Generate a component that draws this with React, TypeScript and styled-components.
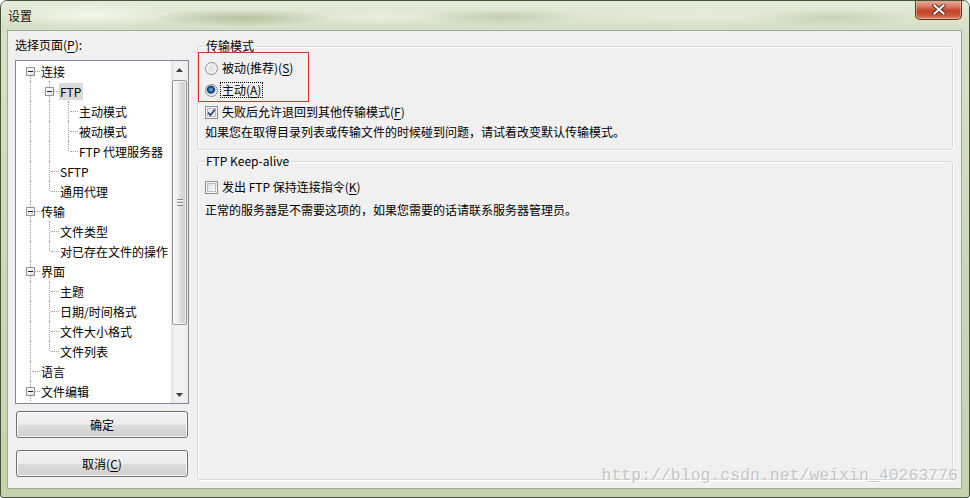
import React from 'react';
import styled, { createGlobalStyle } from 'styled-components';

const FONT = `"Noto Sans CJK SC", "Noto Sans", sans-serif`;

const GlobalStyle = createGlobalStyle`
  html, body { margin: 0; padding: 0; background: #ffffff; }
  body { font-family: ${FONT}; font-size: 12px; color: #000; }
  #root { width: 970px; height: 498px; }
  u { text-decoration: underline; text-underline-offset: 2px; text-decoration-thickness: 1px; }
`;

const Window = styled.div`
  position: relative;
  box-sizing: border-box;
  width: 970px;
  height: 498px;
  display: flex;
  flex-direction: column;
  border: 1px solid #48533f;
  border-radius: 7px 7px 3px 3px;
  background: linear-gradient(to bottom, #e2e9d5 0px, #d7e1c7 30px, #cbd8b6 55%, #c4d2ae 100%);
  overflow: hidden;
  font-family: ${FONT};
`;

const TitleBar = styled.div`
  flex: none;
  height: 29px;
  display: flex;
  align-items: flex-start;
  justify-content: space-between;
  background:
    radial-gradient(ellipse 90px 12px at 90px 14px, rgba(246, 248, 238, 0.9), transparent),
    radial-gradient(ellipse 90px 9px at 240px 17px, rgba(160, 176, 134, 0.65), transparent),
    radial-gradient(ellipse 70px 8px at 380px 16px, rgba(240, 244, 228, 0.7), transparent),
    radial-gradient(ellipse 80px 9px at 500px 16px, rgba(170, 186, 146, 0.5), transparent),
    radial-gradient(ellipse 120px 10px at 700px 15px, rgba(236, 240, 224, 0.6), transparent),
    radial-gradient(ellipse 90px 9px at 830px 17px, rgba(178, 194, 152, 0.5), transparent),
    linear-gradient(to bottom, #e6ecdb, #d6dfc7);
`;

const Title = styled.div`
  padding-left: 7px;
  line-height: 29px;
  font-size: 12px;
  color: #111;
`;

const CloseButton = styled.div`
  flex: none;
  box-sizing: border-box;
  width: 47px;
  height: 20px;
  margin-top: -1px;
  margin-right: 7px;
  display: flex;
  align-items: center;
  justify-content: center;
  border: 1px solid #6b3428;
  border-top: none;
  border-radius: 0 0 5px 5px;
  background: linear-gradient(to bottom, #eab0a0 0%, #d87a62 35%, #c4452b 55%, #c9553a 80%, #dd8a6c 100%);
  box-shadow: inset 0 0 0 1px rgba(255, 220, 205, 0.45);
`;

const Client = styled.div`
  flex: 1;
  min-height: 0;
  display: flex;
  margin: 0 7px 8px 6px;
  border: 1px solid #a2ab97;
  background: #f0f0f0;
`;

const LeftPane = styled.div`
  flex: none;
  box-sizing: border-box;
  width: 181px;
  padding: 6px 0 0 7px;
  display: flex;
  flex-direction: column;
`;

const PaneLabel = styled.div`
  height: 16px;
  line-height: 16px;
  font-size: 12px;
  margin-bottom: 7px;
`;

const TreeBox = styled.div`
  box-sizing: border-box;
  width: 174px;
  height: 344px;
  display: flex;
  border: 1px solid #828790;
  background: #ffffff;
`;

const TreeList = styled.div`
  flex: 1;
  min-width: 0;
  overflow: hidden;
  padding-left: 5px;
`;

const TreeRow = styled.div`
  display: flex;
  align-items: center;
  height: 20px;
`;

const Guide = styled.span<{ $top?: boolean; $bottom?: boolean; $branch?: boolean }>`
  position: relative;
  flex: none;
  width: 19px;
  height: 20px;
  &::before {
    content: '';
    position: absolute;
    left: 9px;
    top: ${(p) => (p.$top ? '0' : '10px')};
    bottom: ${(p) => (p.$bottom ? '0' : '10px')};
    border-left: 1px dotted #a0a0a0;
    display: ${(p) => (p.$top || p.$bottom ? 'block' : 'none')};
  }
  &::after {
    content: '';
    position: absolute;
    left: 11px;
    top: 10px;
    width: 8px;
    border-top: 1px dotted #a0a0a0;
    display: ${(p) => (p.$branch ? 'block' : 'none')};
  }
`;

const Expander = styled.span`
  position: absolute;
  z-index: 1;
  left: 5px;
  top: 6px;
  width: 7px;
  height: 7px;
  border: 1px solid #979797;
  background: linear-gradient(135deg, #ffffff 0%, #f2f2f2 50%, #d9d9d9 100%);
  &::after {
    content: '';
    position: absolute;
    left: 1px;
    top: 3px;
    width: 5px;
    height: 1px;
    background: #1e1e1e;
  }
`;

const NodeLabel = styled.span<{ $selected?: boolean }>`
  white-space: nowrap;
  height: 17px;
  line-height: 17px;
  padding: 0 2px 0 1px;
  font-size: 12px;
  background: ${(p) => (p.$selected ? '#dadada' : 'transparent')};
`;

const ScrollBar = styled.div`
  flex: none;
  width: 17px;
  display: flex;
  flex-direction: column;
  background: linear-gradient(to right, #e4e4e4 0%, #f2f2f2 25%, #f2f2f2 75%, #eaeaea 100%);
`;

const ScrollArrow = styled.div`
  flex: none;
  height: 17px;
  display: flex;
  align-items: center;
  justify-content: center;
`;

const ScrollSpacer = styled.div`
  flex: 1;
`;

const ScrollThumb = styled.div`
  flex: none;
  box-sizing: border-box;
  height: 245px;
  margin: 2px 1px 0 1px;
  border: 1px solid #979797;
  border-radius: 2px;
  background: linear-gradient(to right, #f7f7f7 0%, #ececec 45%, #dcdcdc 55%, #cfcfcf 100%);
  box-shadow: inset 0 0 0 1px rgba(255, 255, 255, 0.7);
  display: flex;
  align-items: center;
  justify-content: center;
`;

const Grip = styled.span`
  width: 6px;
  height: 7px;
  background: repeating-linear-gradient(to bottom, #8c8c8c 0 1px, #fbfbfb 1px 2px, transparent 2px 3px);
`;

const DialogButton = styled.button<{ $gap: number }>`
  display: flex;
  align-items: center;
  justify-content: center;
  box-sizing: border-box;
  width: 172px;
  height: 27px;
  margin: ${(p) => p.$gap}px 0 0 1px;
  padding: 0;
  border: 1px solid #707070;
  border-radius: 3px;
  background: linear-gradient(to bottom, #f3f3f3 0%, #ebebeb 50%, #dddddd 51%, #cfcfcf 100%);
  box-shadow: inset 0 0 0 1px #fbfbfb;
  font-family: ${FONT};
  font-size: 12px;
  line-height: 1;
  color: #000;
`;

const RightPane = styled.div`
  flex: 1;
  min-width: 0;
  box-sizing: border-box;
  padding: 7px 8px 8px 8px;
  display: flex;
  flex-direction: column;
`;

const Group = styled.fieldset<{ $grow?: boolean; $gap?: number }>`
  flex: ${(p) => (p.$grow ? '1' : 'none')};
  min-width: 0;
  margin: ${(p) => p.$gap ?? 0}px 0 0 0;
  padding: 0 7px 7px 7px;
  border: 1px solid #d5d9dc;
  border-radius: 3px;
  box-shadow: inset 1px 1px 0 #ffffff, 1px 1px 0 #ffffff;
`;

const Legend = styled.legend`
  padding: 0 2px 0 1px;
  height: 16px;
  line-height: 16px;
  font-size: 12px;
  color: #000;
`;

const Annotation = styled.div`
  box-sizing: border-box;
  width: 111px;
  margin: -2px 0 0 -7px;
  padding: 4px 0 0 6px;
  border: 1px solid #d3302f;
`;

const OptionRow = styled.div<{ $h: number; $mt?: number }>`
  display: flex;
  align-items: center;
  height: ${(p) => p.$h}px;
  margin-top: ${(p) => p.$mt ?? 0}px;
`;

const RadioMark = styled.span<{ $checked?: boolean }>`
  flex: none;
  box-sizing: border-box;
  width: 13px;
  height: 13px;
  border-radius: 50%;
  border: 1px solid #8b8b8b;
  background: ${(p) =>
    p.$checked
      ? 'radial-gradient(circle at 45% 42%, #a6dcfa 0, #3a8ad0 1.2px, #1b5a9a 2.4px, #0d3563 3.6px, #c9d1d9 4.3px, #eef0f2 5.5px)'
      : 'radial-gradient(circle at 50% 50%, #dedede 0, #e9e9e9 3px, #f6f6f6 5.5px)'};
`;

const CheckMark = styled.span`
  flex: none;
  box-sizing: border-box;
  width: 13px;
  height: 13px;
  border: 1px solid #8e8f8f;
  background: linear-gradient(135deg, #d2d5d9 0%, #eeeeee 55%, #fbfbfb 100%);
  box-shadow: inset 0 0 0 1px #f6f6f6, inset 0 0 0 2px #b9bec4;
  display: flex;
  align-items: center;
  justify-content: center;
`;

const OptionText = styled.span<{ $focused?: boolean }>`
  white-space: nowrap;
  font-size: 12px;
  line-height: 14px;
  margin-left: ${(p) => (p.$focused ? '2px' : '4px')};
  padding: 0 ${(p) => (p.$focused ? '1px' : '0')};
  border: ${(p) => (p.$focused ? '1px dotted #000' : 'none')};
`;

const Note = styled.div<{ $mt?: number }>`
  height: 20px;
  line-height: 20px;
  font-size: 12px;
  white-space: nowrap;
  margin-top: ${(p) => p.$mt ?? 0}px;
`;

const Watermark = styled.div`
  position: absolute;
  right: 11px;
  bottom: 12px;
  font-family: "Liberation Mono", "DejaVu Sans Mono", monospace;
  font-size: 16.5px;
  line-height: 18px;
  color: #c6c6c6;
  text-shadow: 1px 1px 0 rgba(255, 255, 255, 0.9);
  white-space: nowrap;
  pointer-events: none;
`;

type TreeNode = { label: string; level: number; expandable?: boolean; last?: boolean; selected?: boolean };

const treeNodes: TreeNode[] = [
  { label: '连接', level: 0, expandable: true },
  { label: 'FTP', level: 1, expandable: true, selected: true },
  { label: '主动模式', level: 2 },
  { label: '被动模式', level: 2 },
  { label: 'FTP 代理服务器', level: 2, last: true },
  { label: 'SFTP', level: 1 },
  { label: '通用代理', level: 1, last: true },
  { label: '传输', level: 0, expandable: true },
  { label: '文件类型', level: 1 },
  { label: '对已存在文件的操作', level: 1, last: true },
  { label: '界面', level: 0, expandable: true },
  { label: '主题', level: 1 },
  { label: '日期/时间格式', level: 1 },
  { label: '文件大小格式', level: 1 },
  { label: '文件列表', level: 1, last: true },
  { label: '语言', level: 0 },
  { label: '文件编辑', level: 0, expandable: true },
];

const treeRows = (() => {
  const lastAt: boolean[] = [];
  return treeNodes.map((n, i) => {
    const cols: boolean[] = [];
    for (let c = 0; c < n.level; c++) cols.push(!lastAt[c]);
    lastAt[n.level] = !!n.last;
    return { ...n, cols, first: i === 0 };
  });
})();

const ArrowGlyph: React.FC<{ down?: boolean }> = ({ down }) => (
  <svg width="7" height="4" viewBox="0 0 7 4">
    <polygon points={down ? '0,0 7,0 3.5,4' : '0,4 7,4 3.5,0'} fill="#404040" />
  </svg>
);

const CloseGlyph = () => (
  <svg width="14" height="11" viewBox="0 0 14 11">
    <path d="M2.5 1.5 L11.5 9.5 M11.5 1.5 L2.5 9.5" stroke="#5a2418" strokeWidth="4" strokeLinecap="square" />
    <path d="M2.5 1.5 L11.5 9.5 M11.5 1.5 L2.5 9.5" stroke="#ffffff" strokeWidth="2.2" strokeLinecap="square" />
  </svg>
);

const CheckGlyph = () => (
  <svg width="9" height="9" viewBox="0 0 9 9">
    <path d="M1.2 4.6 L3.5 7.2 L7.9 1.4" fill="none" stroke="#21407e" strokeWidth="1.7" />
  </svg>
);

export default function App() {
  return (
    <>
      <GlobalStyle />
      <Window>
        <TitleBar>
          <Title>设置</Title>
          <CloseButton>
            <CloseGlyph />
          </CloseButton>
        </TitleBar>
        <Client>
          <LeftPane>
            <PaneLabel>
              选择页面(<u>P</u>):
            </PaneLabel>
            <TreeBox>
              <TreeList>
                {treeRows.map((r) => (
                  <TreeRow key={r.label}>
                    {r.cols.map((on, c) => (
                      <Guide key={c} $top={on} $bottom={on} />
                    ))}
                    <Guide $top={!r.first} $bottom={!r.last} $branch>
                      {r.expandable && <Expander />}
                    </Guide>
                    <NodeLabel $selected={r.selected}>{r.label}</NodeLabel>
                  </TreeRow>
                ))}
              </TreeList>
              <ScrollBar>
                <ScrollArrow>
                  <ArrowGlyph />
                </ScrollArrow>
                <ScrollThumb>
                  <Grip />
                </ScrollThumb>
                <ScrollSpacer />
                <ScrollArrow>
                  <ArrowGlyph down />
                </ScrollArrow>
              </ScrollBar>
            </TreeBox>
            <DialogButton $gap={7}>确定</DialogButton>
            <DialogButton $gap={12}>
              取消(<u>C</u>)
            </DialogButton>
          </LeftPane>
          <RightPane>
            <Group>
              <Legend>传输模式</Legend>
              <Annotation>
                <OptionRow $h={22}>
                  <RadioMark />
                  <OptionText>
                    被动(推荐)(<u>S</u>)
                  </OptionText>
                </OptionRow>
                <OptionRow $h={22}>
                  <RadioMark $checked />
                  <OptionText $focused>
                    主动(<u>A</u>)
                  </OptionText>
                </OptionRow>
              </Annotation>
              <OptionRow $h={20}>
                <CheckMark>
                  <CheckGlyph />
                </CheckMark>
                <OptionText>
                  失败后允许退回到其他传输模式(<u>F</u>)
                </OptionText>
              </OptionRow>
              <Note>如果您在取得目录列表或传输文件的时候碰到问题，请试着改变默认传输模式。</Note>
            </Group>
            <Group $grow $gap={3}>
              <Legend>FTP Keep-alive</Legend>
              <OptionRow $h={22} $mt={7}>
                <CheckMark />
                <OptionText>
                  发出 FTP 保持连接指令(<u>K</u>)
                </OptionText>
              </OptionRow>
              <Note $mt={2}>正常的服务器是不需要这项的，如果您需要的话请联系服务器管理员。</Note>
            </Group>
          </RightPane>
        </Client>
        <Watermark>http://blog.csdn.net/weixin_40263776</Watermark>
      </Window>
    </>
  );
}
